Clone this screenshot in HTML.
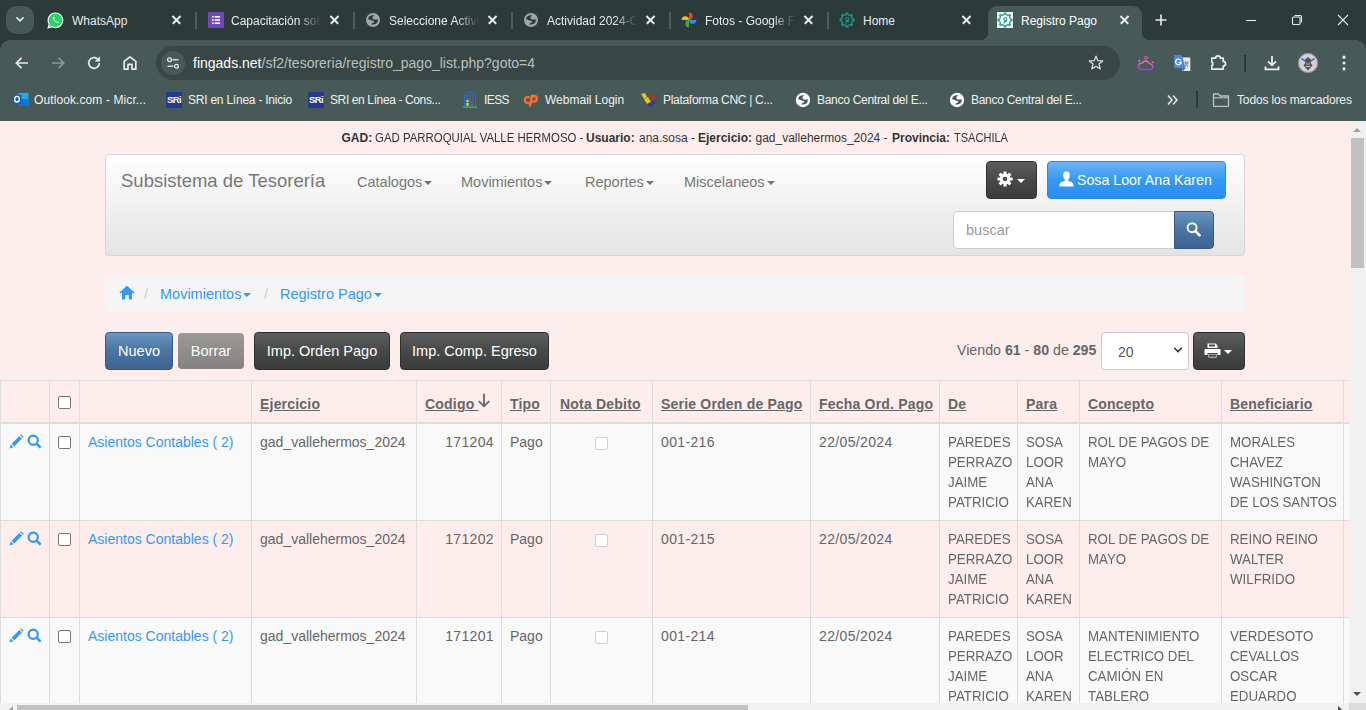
<!DOCTYPE html>
<html><head><meta charset="utf-8">
<style>
*{box-sizing:border-box;margin:0;padding:0}
html,body{width:1366px;height:710px;overflow:hidden;font-family:"Liberation Sans",sans-serif}
body{position:relative;background:#fdeded}
.abs{position:absolute}
#tabstrip{left:0;top:0;width:1366px;height:40px;background:#2c3a39}
#toolbar{left:0;top:40px;width:1366px;height:81px;background:#485a58}
.tt{position:absolute;top:13px;height:16px;line-height:16px;font-size:12px;color:#e8eceb;white-space:nowrap;overflow:hidden}
.fade{-webkit-mask-image:linear-gradient(90deg,#000 75%,transparent 100%)}
.tx{position:absolute;top:12px;width:16px;height:16px}
.tx:before,.tx:after{content:"";position:absolute;left:2.5px;top:7.3px;width:11px;height:1.5px;background:#e8eceb;transform:rotate(45deg)}
.tx:after{transform:rotate(-45deg)}
.sep{position:absolute;top:12px;width:2px;height:17px;background:#4e5c5a}
.bm{position:absolute;top:52px;height:17px;line-height:17px;font-size:12px;color:#eef1f0;white-space:nowrap;letter-spacing:-0.2px}
#page{left:0;top:121px;width:1349px;height:582px;background:#fdeded}
.nav{position:absolute;top:172px;font-size:14.5px;line-height:20px;color:#777;white-space:nowrap}
.car{display:inline-block;width:0;height:0;border-top:4px solid #777;border-left:4px solid transparent;border-right:4px solid transparent;vertical-align:middle;margin-left:2px}
.bc{position:absolute;top:284px;font-size:14.5px;line-height:20px;color:#3399f3;white-space:nowrap}
.btn-dark{background:linear-gradient(#5d5f5f,#474949 50%,#3a3c3c);border:1px solid #2f3131;border-radius:4px}
.btn-info{background:linear-gradient(#6db4f6,#3399f3 50%,#2a8ef0);border:1px solid #2a8be8;border-radius:4px}
.btn-primary{background:linear-gradient(#6b94c0,#4a74a2 50%,#3e6491);border:1px solid #345a85;border-radius:4px}
.btn{height:38px;line-height:36px;text-align:center;color:#fff;font-size:14.5px;border-radius:4px;white-space:nowrap}
.hl{left:0;width:1349px;height:1px;background:#dddddd}
.vl{top:380px;width:1px;height:323px;background:#dddddd}
.th{font-size:14px;line-height:20px;font-weight:bold;letter-spacing:0.2px;color:#666;text-decoration:underline;white-space:nowrap}
.td{font-size:14px;line-height:20px;color:#666;white-space:nowrap}
.up{transform:scaleX(0.95);transform-origin:0 0}
.lnk{color:#3399f3}
.num{letter-spacing:0.35px}
.cb{width:13px;height:13px;border:1px solid #767676;border-radius:2px;background:#fff}
.cbd{width:13px;height:13px;border:1px solid #cfcfcf;border-radius:2px;background:#fff}
#vscroll{left:1349px;top:121px;width:17px;height:582px;background:#f1f1f1}
#hscroll{left:0;top:703px;width:1349px;height:7px;background:#f1f1f1}
.gl{top:130px;font-size:12px;line-height:17px;color:#333;white-space:nowrap}
</style></head><body>
<div id="tabstrip" class="abs">
  <div class="abs" style="left:6px;top:6px;width:28px;height:28px;border-radius:10px;background:#475957"></div>
  <svg class="abs" style="left:14px;top:13px" width="12" height="12" viewBox="0 0 12 12"><path d="M2.5 4.4 L6 7.9 L9.5 4.4" stroke="#e6eaea" stroke-width="1.6" fill="none"/></svg>
  <!-- tab1 -->
  <svg class="abs" style="left:47px;top:12px" width="17" height="17" viewBox="0 0 17 17"><path d="M8.5 1 A7.3 7.3 0 0 1 8.5 15.6 A7.3 7.3 0 0 1 5 14.7 L1.2 15.8 L2.3 12.2 A7.3 7.3 0 0 1 8.5 1Z" fill="#25d366" stroke="#fff" stroke-width="1.2"/><path d="M5.8 5 C5.5 6.8 7.5 10.5 11 11.3 L12 10.2 L10.6 9.3 L9.9 10 C8.6 9.4 7.5 8.3 7.1 7.3 L7.8 6.5 L7 5 Z" fill="#fff"/></svg>
  <div class="tt" style="left:72px;width:90px">WhatsApp</div>
  <div class="tx" style="left:168px"></div>
  <div class="sep" style="left:195px"></div>
  <!-- tab2 -->
  <div class="abs" style="left:208px;top:12px;width:16px;height:16px;background:#7248b9;border-radius:1px"></div>
  <svg class="abs" style="left:208px;top:12px" width="16" height="16" viewBox="0 0 16 16"><g fill="#fff"><rect x="4" y="4" width="1.6" height="1.6"/><rect x="4" y="7.2" width="1.6" height="1.6"/><rect x="4" y="10.4" width="1.6" height="1.6"/><rect x="6.6" y="4" width="5.4" height="1.6"/><rect x="6.6" y="7.2" width="5.4" height="1.6"/><rect x="6.6" y="10.4" width="5.4" height="1.6"/></g></svg>
  <div class="tt fade" style="left:231px;width:90px">Capacitación sobre</div>
  <div class="tx" style="left:326px"></div>
  <div class="sep" style="left:353px"></div>
  <!-- tab3 -->
  <svg class="abs" style="left:365px;top:12px" width="16" height="16" viewBox="0 0 16 16"><circle cx="8" cy="8" r="7" fill="#a0a6a8"/><path d="M3.1 7.2 C3.3 5 4.8 3.3 8.5 3.1 L8.9 4.1 C7 4.5 6.8 5.8 8.2 7.2 C9 7.9 11 7.6 12.6 7.2 C13 9 12.5 10.5 11.2 11.6 C10 12.4 8 12.7 6.1 12.6 C6.5 11.5 7.5 11 9.2 10.2 C9.5 9.5 9 9 8.5 8.9 C6 8.5 4.5 7.5 3.1 7.2Z" fill="#2c3a39"/></svg>
  <div class="tt fade" style="left:389px;width:90px">Seleccione Actividad</div>
  <div class="tx" style="left:484px"></div>
  <div class="sep" style="left:511px"></div>
  <!-- tab4 -->
  <svg class="abs" style="left:523px;top:12px" width="16" height="16" viewBox="0 0 16 16"><circle cx="8" cy="8" r="7" fill="#a0a6a8"/><path d="M3.1 7.2 C3.3 5 4.8 3.3 8.5 3.1 L8.9 4.1 C7 4.5 6.8 5.8 8.2 7.2 C9 7.9 11 7.6 12.6 7.2 C13 9 12.5 10.5 11.2 11.6 C10 12.4 8 12.7 6.1 12.6 C6.5 11.5 7.5 11 9.2 10.2 C9.5 9.5 9 9 8.5 8.9 C6 8.5 4.5 7.5 3.1 7.2Z" fill="#2c3a39"/></svg>
  <div class="tt fade" style="left:547px;width:90px">Actividad 2024-Catálogo</div>
  <div class="tx" style="left:642px"></div>
  <div class="sep" style="left:669px"></div>
  <!-- tab5 photos -->
  <svg class="abs" style="left:681px;top:12px" width="16" height="16" viewBox="0 0 16 16"><path d="M8 0.6 A3.7 3.7 0 0 1 8 8 Z" fill="#ea4335"/><path d="M0.6 8 A3.7 3.7 0 0 1 8 8 Z" fill="#fbbc04"/><path d="M8 8 A3.7 3.7 0 0 0 15.4 8 Z" fill="#4285f4"/><path d="M8 8 A3.7 3.7 0 0 0 8 15.4 Z" fill="#34a853"/></svg>
  <div class="tt fade" style="left:705px;width:90px">Fotos - Google Fotos</div>
  <div class="tx" style="left:800px"></div>
  <div class="sep" style="left:827px"></div>
  <!-- tab6 home -->
  <svg class="abs" style="left:839px;top:12px" width="16" height="16" viewBox="0 0 16 16"><path d="M13.11 6.25 L13.32 7.07 L14.95 7.18 L14.95 8.82 L13.32 8.93 L12.85 10.38 L12.42 11.11 L13.50 12.33 L12.33 13.50 L11.11 12.42 L9.75 13.11 L8.93 13.32 L8.82 14.95 L7.18 14.95 L7.07 13.32 L5.62 12.85 L4.89 12.42 L3.67 13.50 L2.50 12.33 L3.58 11.11 L2.89 9.75 L2.68 8.93 L1.05 8.82 L1.05 7.18 L2.68 7.07 L3.15 5.62 L3.58 4.89 L2.50 3.67 L3.67 2.50 L4.89 3.58 L6.25 2.89 L7.07 2.68 L7.18 1.05 L8.82 1.05 L8.93 2.68 L10.38 3.15 L11.11 3.58 L12.33 2.50 L13.50 3.67 L12.42 4.89Z" fill="none" stroke="#1f9a8e" stroke-width="1.2" stroke-linejoin="round"/><circle cx="8.3" cy="7.2" r="1.5" fill="none" stroke="#1f9a8e" stroke-width="1.1"/><path d="M8 8.7 L6.8 11.5 M8.5 8.7 L9.6 10" stroke="#1f9a8e" stroke-width="1.1"/></svg>
  <div class="tt" style="left:863px;width:90px">Home</div>
  <div class="tx" style="left:958px"></div>
  <!-- active tab -->
  <div class="abs" style="left:988px;top:6px;width:154px;height:34px;background:#485a58;border-radius:9px 9px 0 0"></div>
  <div class="abs" style="left:980px;top:32px;width:8px;height:8px;background:radial-gradient(circle at 0 0,#2c3a39 8px,#485a58 8.5px)"></div>
  <div class="abs" style="left:1142px;top:32px;width:8px;height:8px;background:radial-gradient(circle at 100% 0,#2c3a39 8px,#485a58 8.5px)"></div>
  <div class="abs" style="left:997px;top:12px;width:16px;height:16px;background:#f2f5f4"></div>
  <svg class="abs" style="left:997px;top:12px" width="16" height="16" viewBox="0 0 16 16"><path d="M13.11 6.25 L13.32 7.07 L14.95 7.18 L14.95 8.82 L13.32 8.93 L12.85 10.38 L12.42 11.11 L13.50 12.33 L12.33 13.50 L11.11 12.42 L9.75 13.11 L8.93 13.32 L8.82 14.95 L7.18 14.95 L7.07 13.32 L5.62 12.85 L4.89 12.42 L3.67 13.50 L2.50 12.33 L3.58 11.11 L2.89 9.75 L2.68 8.93 L1.05 8.82 L1.05 7.18 L2.68 7.07 L3.15 5.62 L3.58 4.89 L2.50 3.67 L3.67 2.50 L4.89 3.58 L6.25 2.89 L7.07 2.68 L7.18 1.05 L8.82 1.05 L8.93 2.68 L10.38 3.15 L11.11 3.58 L12.33 2.50 L13.50 3.67 L12.42 4.89Z" fill="none" stroke="#1f9a8e" stroke-width="1.2" stroke-linejoin="round"/><circle cx="8.3" cy="7.2" r="1.5" fill="none" stroke="#1f9a8e" stroke-width="1.1"/><path d="M8 8.7 L6.8 11.5 M8.5 8.7 L9.6 10" stroke="#1f9a8e" stroke-width="1.1"/></svg>
  <div class="tt" style="left:1021px;width:90px;color:#fff">Registro Pago</div>
  <div class="tx" style="left:1116px"></div>
  <svg class="abs" style="left:1154px;top:13px" width="14" height="14" viewBox="0 0 14 14"><path d="M7 1.5 V12.5 M1.5 7 H12.5" stroke="#e8eceb" stroke-width="1.6"/></svg>
  <svg class="abs" style="left:1245px;top:14px" width="12" height="12" viewBox="0 0 12 12"><path d="M1 6.5 H11" stroke="#e8eceb" stroke-width="1.1"/></svg>
  <svg class="abs" style="left:1291px;top:14px" width="12" height="12" viewBox="0 0 12 12"><rect x="1.5" y="3" width="7.5" height="7.5" rx="1" stroke="#e8eceb" stroke-width="1.1" fill="none"/><path d="M3.5 1.5 H9.5 A1 1 0 0 1 10.5 2.5 V8.5" stroke="#e8eceb" stroke-width="1.1" fill="none"/></svg>
  <svg class="abs" style="left:1337px;top:14px" width="12" height="12" viewBox="0 0 12 12"><path d="M1 1 L11 11 M11 1 L1 11" stroke="#e8eceb" stroke-width="1.1"/></svg>
</div>
<div id="toolbar" class="abs">
  <div class="abs" style="left:0;top:0;width:10px;height:10px;background:radial-gradient(circle at 100% 100%,#485a58 9.5px,#2c3a39 10px)"></div>
  <div class="abs" style="left:1356px;top:0;width:10px;height:10px;background:radial-gradient(circle at 0 100%,#485a58 9.5px,#2c3a39 10px)"></div>
  <svg class="abs" style="left:13px;top:14px" width="18" height="18" viewBox="0 0 18 18"><path d="M15 9 H3.5 M8.5 3.8 L3.3 9 L8.5 14.2" stroke="#e8eceb" stroke-width="1.7" fill="none"/></svg>
  <svg class="abs" style="left:49px;top:14px" width="18" height="18" viewBox="0 0 18 18"><path d="M3 9 H14.5 M9.5 3.8 L14.7 9 L9.5 14.2" stroke="#8c9896" stroke-width="1.7" fill="none"/></svg>
  <svg class="abs" style="left:85px;top:14px" width="18" height="18" viewBox="0 0 18 18"><path d="M14.3 9 A5.3 5.3 0 1 1 12.4 4.9" stroke="#e8eceb" stroke-width="1.7" fill="none"/><path d="M14.6 2.6 V7.2 H10" fill="#e8eceb" stroke="#e8eceb" stroke-width="0.6"/></svg>
  <svg class="abs" style="left:121px;top:14px" width="18" height="18" viewBox="0 0 18 18"><path d="M3.2 15.2 V7.4 L9 2.8 L14.8 7.4 V15.2 H11 V10.3 H7 V15.2 Z" stroke="#e8eceb" stroke-width="1.7" fill="none" stroke-linejoin="round"/></svg>
  <div class="abs" style="left:156px;top:6px;width:964px;height:34px;border-radius:17px;background:#384645"></div>
  <div class="abs" style="left:161px;top:11px;width:24px;height:24px;border-radius:12px;background:#485a58"></div>
  <svg class="abs" style="left:166px;top:16px" width="14" height="14" viewBox="0 0 14 14"><g stroke="#e8eceb" stroke-width="1.3" fill="none"><circle cx="3.5" cy="3.8" r="1.9"/><path d="M6.5 3.8 H12.5"/><circle cx="10.5" cy="10.2" r="1.9"/><path d="M1.5 10.2 H7.5"/></g></svg>
  <div class="abs" style="left:193px;top:15px;font-size:14px;color:#fff;white-space:nowrap;line-height:17px">fingads.net<span style="color:#b7c0bf">/sf2/tesoreria/registro_pago_list.php?goto=4</span></div>
  <svg class="abs" style="left:1087px;top:14px" width="18" height="18" viewBox="0 0 18 18"><path d="M9 2.2 L10.9 6.7 L15.7 7 L12 10.1 L13.2 14.9 L9 12.3 L4.8 14.9 L6 10.1 L2.3 7 L7.1 6.7 Z" stroke="#d8dddc" stroke-width="1.3" fill="none" stroke-linejoin="round"/></svg>
  <!-- extensions -->
  <svg class="abs" style="left:1137px;top:15px" width="18" height="16" viewBox="0 0 18 16"><defs><linearGradient id="wg" x1="0" y1="0" x2="0" y2="1"><stop offset="0" stop-color="#ff6f9a"/><stop offset="1" stop-color="#9a3cf0"/></linearGradient></defs><path d="M4.2 14.6 H13.4 A2.6 2.6 0 0 0 14.3 9.6 A2.1 2.1 0 0 0 12.2 8.4 A4 4 0 0 0 5 8.3 A3.1 3.1 0 0 0 4.2 14.6 Z" stroke="url(#wg)" stroke-width="1.5" fill="none"/><circle cx="9" cy="2.6" r="1.5" stroke="#e060c0" stroke-width="1" fill="none"/><circle cx="2.3" cy="5.9" r="1.1" fill="#e060c0"/><circle cx="15.8" cy="7.3" r="1.1" fill="#e060b0"/></svg>
  <svg class="abs" style="left:1173px;top:15px" width="18" height="17" viewBox="0 0 18 17"><rect x="9.3" y="2.4" width="8" height="13.6" fill="#e6e6e6"/><path d="M12 6 L15 12 M15 6.5 L12 11.5 M11.5 8 H15.5" stroke="#6a7a78" stroke-width="0.9"/><path d="M1.1 0 H8.8 L12.6 13.2 H1.1 Z" fill="#4a86e8"/><path d="M9.3 13.2 H12.6 L10 16 Z" fill="#2a4fb0"/><path d="M7.8 5.4 A2.8 2.8 0 1 0 8.2 7.4 H5.8" stroke="#fff" stroke-width="1.4" fill="none"/></svg>
  <svg class="abs" style="left:1209px;top:13px" width="19" height="19" viewBox="0 0 19 19"><path d="M2.8 5.2 H6.6 A2.4 2.4 0 0 1 11.4 5.2 H14.2 V8.4 A2.3 2.3 0 0 1 14.2 13 V16.2 H2.8 V12.6 C4.2 12.3 4.2 9.5 2.8 9.2 Z" stroke="#e8eceb" stroke-width="1.7" fill="none" stroke-linejoin="round"/></svg>
  <div class="abs" style="left:1244px;top:15px;width:2px;height:17px;background:#2f3a38"></div>
  <svg class="abs" style="left:1263px;top:14px" width="18" height="18" viewBox="0 0 18 18"><path d="M9 2 V11 M5 7.3 L9 11.3 L13 7.3 M2.5 12.5 V15.3 H15.5 V12.5" stroke="#e8eceb" stroke-width="1.8" fill="none"/></svg>
  <svg class="abs" style="left:1298px;top:13px" width="20" height="20" viewBox="0 0 20 20"><circle cx="10" cy="10" r="10" fill="#d3cfd6"/><path d="M10 4 L6.5 7 L7.5 9.5 L5.5 12.5 L10 17.5 L14.5 12.5 L12.5 9.5 L13.5 7 Z" fill="#55545c"/><path d="M3.5 5.5 L7 8 M16.5 5.5 L13 8" stroke="#2a5ab0" stroke-width="1.4"/><path d="M8 11 H12 M7.5 13.5 H12.5" stroke="#c8c8c8" stroke-width="0.9"/><circle cx="10" cy="10" r="9.5" fill="none" stroke="#8a8a92" stroke-width="1"/></svg>
  <svg class="abs" style="left:1336px;top:14px" width="16" height="18" viewBox="0 0 16 18"><circle cx="8" cy="3.2" r="1.6" fill="#e8eceb"/><circle cx="8" cy="9" r="1.6" fill="#e8eceb"/><circle cx="8" cy="14.8" r="1.6" fill="#e8eceb"/></svg>
  <!-- bookmarks -->
  <div class="bm" style="left:34px;letter-spacing:0.1px">Outlook.com - Micr...</div>
  <svg class="abs" style="left:12px;top:51px" width="17" height="17" viewBox="0 0 17 17"><rect x="6" y="2" width="10.5" height="13" fill="#28a8ea"/><path d="M6 8 L16.5 8 V15 H6Z" fill="#0078d4"/><rect x="0.5" y="3.5" width="9" height="9.5" rx="1" fill="#0f5fb8"/><ellipse cx="5" cy="8.2" rx="2.4" ry="2.8" stroke="#fff" stroke-width="1.4" fill="none"/></svg>
  <div class="abs" style="left:166px;top:52px;width:16px;height:16px;background:#233a8f"></div>
  <div class="abs" style="left:166px;top:55px;width:16px;font-size:9.5px;font-weight:bold;color:#fff;letter-spacing:-0.6px;line-height:10px;text-align:center">SRi</div>
  <div class="bm" style="left:188px;letter-spacing:-0.23px">SRI en Línea - Inicio</div>
  <div class="abs" style="left:308px;top:52px;width:16px;height:16px;background:#233a8f"></div>
  <div class="abs" style="left:308px;top:55px;width:16px;font-size:9.5px;font-weight:bold;color:#fff;letter-spacing:-0.6px;line-height:10px;text-align:center">SRi</div>
  <div class="bm" style="left:330px;letter-spacing:-0.38px">SRI en Línea - Cons...</div>
  <svg class="abs" style="left:462px;top:51px" width="16" height="18" viewBox="0 0 16 18"><g stroke="#2a6fd0" stroke-width="1" fill="none"><path d="M2.5 16 V6 C2.5 2.5 5 1 8 1 C11 1 13.5 2.5 13.5 6 V16"/><path d="M5 16 V4 M8 16 V2 M11 16 V4"/></g><circle cx="5.5" cy="10" r="1.3" fill="#f2c21b"/><path d="M4 12 H7 L6.5 15 H4.5Z" fill="#f2c21b"/><circle cx="10" cy="11" r="1.1" fill="#e03030"/><path d="M9 12.5 H11.5 V15 H9Z" fill="#2a6fd0"/><path d="M1 16.2 H15" stroke="#30b040" stroke-width="1.6"/></svg>
  <div class="bm" style="left:484px;letter-spacing:-0.6px">IESS</div>
  <svg class="abs" style="left:522px;top:52px" width="17" height="16" viewBox="0 0 17 16"><g stroke="#ff6c2c" stroke-width="2.4" fill="none" stroke-linecap="round"><path d="M6.8 5.2 A3 3 0 1 0 6 11"/><path d="M8 13.5 L10 4 H12 A2.8 2.8 0 0 1 12 9.6 H10.5"/></g></svg>
  <div class="bm" style="left:545px;letter-spacing:0px">Webmail Login</div>
  <svg class="abs" style="left:640px;top:51px" width="17" height="17" viewBox="0 0 17 17"><path d="M1 3 L5 2 L7 6 L4 8Z" fill="#e8c020"/><path d="M4 8 L8 6 L11 11 L7 13Z" fill="#e8c020"/><path d="M7 13 L11 11 L13 15 L9 16Z" fill="#2a3f9a"/><path d="M11 3 C14 3 16 6 14 9 L12 11 L11 9 C13 7 13 5 11 5Z" fill="#d02828"/><path d="M11 11 L14 9 L16 12 L13 15Z" fill="#3040a0"/></svg>
  <div class="bm" style="left:663px;letter-spacing:-0.3px">Plataforma CNC | C...</div>
  <svg class="abs" style="left:795px;top:52px" width="16" height="16" viewBox="0 0 16 16"><circle cx="8" cy="8" r="7.2" fill="#ffffff"/><path d="M3.1 7.2 C3.3 5 4.8 3.3 8.5 3.1 L8.9 4.1 C7 4.5 6.8 5.8 8.2 7.2 C9 7.9 11 7.6 12.6 7.2 C13 9 12.5 10.5 11.2 11.6 C10 12.4 8 12.7 6.1 12.6 C6.5 11.5 7.5 11 9.2 10.2 C9.5 9.5 9 9 8.5 8.9 C6 8.5 4.5 7.5 3.1 7.2Z" fill="#485a58"/></svg>
  <div class="bm" style="left:817px;letter-spacing:-0.28px">Banco Central del E...</div>
  <svg class="abs" style="left:949px;top:52px" width="16" height="16" viewBox="0 0 16 16"><circle cx="8" cy="8" r="7.2" fill="#ffffff"/><path d="M3.1 7.2 C3.3 5 4.8 3.3 8.5 3.1 L8.9 4.1 C7 4.5 6.8 5.8 8.2 7.2 C9 7.9 11 7.6 12.6 7.2 C13 9 12.5 10.5 11.2 11.6 C10 12.4 8 12.7 6.1 12.6 C6.5 11.5 7.5 11 9.2 10.2 C9.5 9.5 9 9 8.5 8.9 C6 8.5 4.5 7.5 3.1 7.2Z" fill="#485a58"/></svg>
  <div class="bm" style="left:971px;letter-spacing:-0.28px">Banco Central del E...</div>
  <svg class="abs" style="left:1166px;top:54px" width="14" height="12" viewBox="0 0 14 12"><path d="M2 1.5 L6 6 L2 10.5 M7 1.5 L11 6 L7 10.5" stroke="#e8eceb" stroke-width="1.5" fill="none"/></svg>
  <div class="abs" style="left:1196px;top:51px;width:2px;height:17px;background:#2f3a38"></div>
  <svg class="abs" style="left:1212px;top:52px" width="18" height="16" viewBox="0 0 18 16"><path d="M1.5 2 H6.5 L8.2 4 H16.5 V14.3 H1.5 Z" stroke="#b9c2c1" stroke-width="1.3" fill="none" stroke-linejoin="round"/><path d="M1.5 5.8 H16.5" stroke="#b9c2c1" stroke-width="1.1"/></svg>
  <div class="bm" style="left:1237px;letter-spacing:-0.13px">Todos los marcadores</div>
</div>
<div id="page" class="abs"></div>
<div class="abs gl" style="left:341.5px"><b>GAD:</b></div><div class="abs gl" style="left:374.6px;transform:scaleX(0.951);transform-origin:0 0">GAD PARROQUIAL VALLE HERMOSO -</div><div class="abs gl" style="left:586px"><b>Usuario:</b></div><div class="abs gl" style="left:639px">ana.sosa -</div><div class="abs gl" style="left:698px"><b>Ejercicio:</b></div><div class="abs gl" style="left:755.5px">gad_vallehermos_2024 -</div><div class="abs gl" style="left:892px"><b>Provincia:</b></div><div class="abs gl" style="left:953.5px;transform:scaleX(0.92);transform-origin:0 0">TSACHILA</div>
<!-- navbar -->
<div class="abs" style="left:105px;top:154px;width:1140px;height:102px;border:1px solid #d5d5d5;border-radius:4px;background:linear-gradient(#ffffff,#eeeeee 60%,#e4e4e4)"></div>
<div class="abs" style="left:121px;top:170px;font-size:18.5px;line-height:22px;color:#777;white-space:nowrap">Subsistema de Tesorería</div>
<div class="nav" style="left:357px">Catalogos<i class="car"></i></div>
<div class="nav" style="left:461px">Movimientos<i class="car"></i></div>
<div class="nav" style="left:585px">Reportes<i class="car"></i></div>
<div class="nav" style="left:684px">Miscelaneos<i class="car"></i></div>
<div class="abs btn-dark" style="left:986px;top:161px;width:51px;height:38px"></div>
<svg class="abs" style="left:997px;top:171px" width="16" height="16" viewBox="0 0 16 16"><g fill="#fff" transform="translate(8,8)"><circle r="5.2"/><rect x="-1.6" y="-7.6" width="3.2" height="15.2" rx="0.6"/><rect x="-1.6" y="-7.6" width="3.2" height="15.2" rx="0.6" transform="rotate(45)"/><rect x="-1.6" y="-7.6" width="3.2" height="15.2" rx="0.6" transform="rotate(90)"/><rect x="-1.6" y="-7.6" width="3.2" height="15.2" rx="0.6" transform="rotate(135)"/></g><circle cx="8" cy="8" r="2.3" fill="#4d4f4f"/></svg>
<i class="car abs" style="left:1015px;top:179px;border-top-color:#fff"></i>
<div class="abs btn-info" style="left:1047px;top:161px;width:179px;height:38px"></div>
<svg class="abs" style="left:1059px;top:171px" width="15" height="16" viewBox="0 0 15 16"><path fill="#fff" d="M7.5 0.5 C10 0.5 11 2.5 10.8 4.8 C10.6 6.8 9.7 8.4 9 9 L9.2 9.8 C12 10.7 14.5 11.8 14.5 13.5 V15.5 H0.5 V13.5 C0.5 11.8 3 10.7 5.8 9.8 L6 9 C5.3 8.4 4.4 6.8 4.2 4.8 C4 2.5 5 0.5 7.5 0.5Z"/></svg>
<div class="abs" style="left:1077px;top:170px;font-size:14.2px;line-height:20px;color:#fff;white-space:nowrap">Sosa Loor Ana Karen</div>
<div class="abs" style="left:953px;top:211px;width:222px;height:38px;background:#fff;border:1px solid #cccccc;border-radius:4px 0 0 4px"></div>
<div class="abs" style="left:966px;top:220px;font-size:14.5px;line-height:20px;color:#999;white-space:nowrap">buscar</div>
<div class="abs btn-primary" style="left:1174px;top:211px;width:40px;height:38px;border-radius:0 4px 4px 0"></div>
<svg class="abs" style="left:1186px;top:222px" width="15" height="15" viewBox="0 0 15 15"><circle cx="6.1" cy="5.7" r="4.5" stroke="#fff" stroke-width="1.9" fill="none"/><path d="M9.3 9 L13.6 13.3" stroke="#fff" stroke-width="2.6" stroke-linecap="round"/></svg>
<!-- breadcrumb -->
<div class="abs" style="left:105px;top:276px;width:1140px;height:36px;background:#f5f5f5;border-radius:4px"></div>
<svg class="abs" style="left:119px;top:285px" width="16" height="15" viewBox="0 0 16 15"><path fill="#3399f3" d="M8 0.8 L15.6 7.6 L14.4 8.8 L13 7.5 V14.5 H9.8 V10 H6.2 V14.5 H3 V7.5 L1.6 8.8 L0.4 7.6 Z"/></svg>
<div class="bc" style="left:144px;color:#ccc">/</div>
<div class="bc" style="left:160px">Movimientos<i class="car" style="border-top-color:#3399f3"></i></div>
<div class="bc" style="left:264px;color:#ccc">/</div>
<div class="bc" style="left:280px">Registro Pago<i class="car" style="border-top-color:#3399f3"></i></div>
<!-- buttons -->
<div class="abs btn-primary btn" style="left:105px;top:332px;width:68px">Nuevo</div>
<div class="abs btn" style="left:178px;top:333px;width:66px;height:36px;line-height:36px;background:linear-gradient(#9b9898,#858181);border:none;color:#fafafa">Borrar</div>
<div class="abs btn-dark btn" style="left:254px;top:332px;width:136px">Imp. Orden Pago</div>
<div class="abs btn-dark btn" style="left:400px;top:332px;width:149px">Imp. Comp. Egreso</div>
<div class="abs" style="left:957px;top:340px;font-size:14.2px;line-height:20px;color:#666;white-space:nowrap">Viendo <b>61</b> - <b>80</b> de <b>295</b></div>
<div class="abs" style="left:1101px;top:332px;width:88px;height:38px;background:#fff;border:1px solid #ccc;border-radius:4px"></div>
<div class="abs" style="left:1118px;top:342px;font-size:14px;line-height:20px;color:#555">20</div>
<svg class="abs" style="left:1173px;top:346px" width="10" height="8" viewBox="0 0 10 8"><path d="M1.2 1.8 L5 5.6 L8.8 1.8" stroke="#333" stroke-width="1.5" fill="none"/></svg>
<div class="abs btn-dark" style="left:1193px;top:332px;width:52px;height:38px"></div>
<svg class="abs" style="left:1204px;top:343px" width="17" height="15" viewBox="0 0 17 15"><path fill="#fff" d="M3.5 0.5 H11.5 L13.5 2.5 V5 H3.5Z M1.5 6 H15.5 A1 1 0 0 1 16.5 7 V12 H13.5 V10 H3.5 V12 H0.5 V7 A1 1 0 0 1 1.5 6Z M4.5 11 H12.5 V14.5 H4.5Z"/><rect x="5" y="1.5" width="6" height="2" fill="#474949"/><rect x="5" y="11.5" width="7" height="2.3" fill="#474949"/></svg>
<i class="car abs" style="left:1222px;top:350px;border-top-color:#fff"></i>
<div class="abs" style="left:0;top:424px;width:1349px;height:96px;background:#f9f9f9"></div>
<div class="abs" style="left:0;top:618px;width:1349px;height:86px;background:#f9f9f9"></div>
<div class="abs hl" style="top:380px"></div>
<div class="abs hl" style="top:422px;height:2px"></div>
<div class="abs hl" style="top:520px"></div>
<div class="abs hl" style="top:617px"></div>
<div class="abs vl" style="left:0px"></div>
<div class="abs vl" style="left:49px"></div>
<div class="abs vl" style="left:79px"></div>
<div class="abs vl" style="left:251px"></div>
<div class="abs vl" style="left:416px"></div>
<div class="abs vl" style="left:501px"></div>
<div class="abs vl" style="left:550px"></div>
<div class="abs vl" style="left:652px"></div>
<div class="abs vl" style="left:810px"></div>
<div class="abs vl" style="left:939px"></div>
<div class="abs vl" style="left:1017px"></div>
<div class="abs vl" style="left:1079px"></div>
<div class="abs vl" style="left:1221px"></div>
<div class="abs vl" style="left:1343px"></div>
<div class="abs th" style="left:260px;top:394px;">Ejercicio</div>
<div class="abs th" style="left:425px;top:394px;">Codigo&nbsp;</div>
<div class="abs th" style="left:510px;top:394px;">Tipo</div>
<div class="abs th" style="left:560px;top:394px;">Nota Debito</div>
<div class="abs th" style="left:661px;top:394px;">Serie Orden de Pago</div>
<div class="abs th" style="left:819px;top:394px;">Fecha Ord. Pago</div>
<div class="abs th" style="left:948px;top:394px;">De</div>
<div class="abs th" style="left:1026px;top:394px;">Para</div>
<div class="abs th" style="left:1088px;top:394px;">Concepto</div>
<div class="abs th" style="left:1230px;top:394px;">Beneficiario</div>
<div class="abs cb" style="left:58px;top:396px"></div>
<svg class="abs" style="left:477px;top:393px" width="14" height="15" viewBox="0 0 14 15"><path d="M7 0.8 V13.3 M1.8 8.1 L7 13.3 L12.2 8.1" stroke="#666" stroke-width="1.8" fill="none"/></svg>
<div class="abs" style="left:9px;top:434px;width:15px;height:15px"><svg width="15" height="15" viewBox="0 0 15 15"><path fill="#3399f3" d="M0.5 14.5 L1.8 10.6 L4.4 13.2 Z M2.6 9.8 L10.4 2 L13 4.6 L5.2 12.4 Z M11.2 1.2 L12.2 0.3 L14.8 2.9 L13.8 3.8 Z"/></svg></div>
<div class="abs" style="left:27px;top:434px;width:15px;height:15px"><svg width="15" height="15" viewBox="0 0 15 15"><circle cx="6.2" cy="6.2" r="4.6" stroke="#3399f3" stroke-width="2.2" fill="none"/><path d="M9.4 9.4 L13.6 13.6" stroke="#3399f3" stroke-width="2.5"/></svg></div>
<div class="abs cb" style="left:58px;top:436px"></div>
<div class="abs td lnk" style="left:88px;top:432px;">Asientos Contables ( 2)</div>
<div class="abs td" style="left:260px;top:432px;">gad_vallehermos_2024</div>
<div class="abs td num" style="left:417px;top:432px;width:77px;text-align:right">171204</div>
<div class="abs td" style="left:510px;top:432px;">Pago</div>
<div class="abs cbd" style="left:595px;top:437px"></div>
<div class="abs td num" style="left:661px;top:432px;">001-216</div>
<div class="abs td num" style="left:819px;top:432px;">22/05/2024</div>
<div class="abs td up" style="left:948px;top:432px;">PAREDES<br>PERRAZO<br>JAIME<br>PATRICIO</div>
<div class="abs td up" style="left:1026px;top:432px;">SOSA<br>LOOR<br>ANA<br>KAREN</div>
<div class="abs td up" style="left:1088px;top:432px;">ROL DE PAGOS DE<br>MAYO</div>
<div class="abs td up" style="left:1230px;top:432px;">MORALES<br>CHAVEZ<br>WASHINGTON<br>DE LOS SANTOS</div>
<div class="abs" style="left:9px;top:531px;width:15px;height:15px"><svg width="15" height="15" viewBox="0 0 15 15"><path fill="#3399f3" d="M0.5 14.5 L1.8 10.6 L4.4 13.2 Z M2.6 9.8 L10.4 2 L13 4.6 L5.2 12.4 Z M11.2 1.2 L12.2 0.3 L14.8 2.9 L13.8 3.8 Z"/></svg></div>
<div class="abs" style="left:27px;top:531px;width:15px;height:15px"><svg width="15" height="15" viewBox="0 0 15 15"><circle cx="6.2" cy="6.2" r="4.6" stroke="#3399f3" stroke-width="2.2" fill="none"/><path d="M9.4 9.4 L13.6 13.6" stroke="#3399f3" stroke-width="2.5"/></svg></div>
<div class="abs cb" style="left:58px;top:533px"></div>
<div class="abs td lnk" style="left:88px;top:529px;">Asientos Contables ( 2)</div>
<div class="abs td" style="left:260px;top:529px;">gad_vallehermos_2024</div>
<div class="abs td num" style="left:417px;top:529px;width:77px;text-align:right">171202</div>
<div class="abs td" style="left:510px;top:529px;">Pago</div>
<div class="abs cbd" style="left:595px;top:534px"></div>
<div class="abs td num" style="left:661px;top:529px;">001-215</div>
<div class="abs td num" style="left:819px;top:529px;">22/05/2024</div>
<div class="abs td up" style="left:948px;top:529px;">PAREDES<br>PERRAZO<br>JAIME<br>PATRICIO</div>
<div class="abs td up" style="left:1026px;top:529px;">SOSA<br>LOOR<br>ANA<br>KAREN</div>
<div class="abs td up" style="left:1088px;top:529px;">ROL DE PAGOS DE<br>MAYO</div>
<div class="abs td up" style="left:1230px;top:529px;">REINO REINO<br>WALTER<br>WILFRIDO</div>
<div class="abs" style="left:9px;top:628px;width:15px;height:15px"><svg width="15" height="15" viewBox="0 0 15 15"><path fill="#3399f3" d="M0.5 14.5 L1.8 10.6 L4.4 13.2 Z M2.6 9.8 L10.4 2 L13 4.6 L5.2 12.4 Z M11.2 1.2 L12.2 0.3 L14.8 2.9 L13.8 3.8 Z"/></svg></div>
<div class="abs" style="left:27px;top:628px;width:15px;height:15px"><svg width="15" height="15" viewBox="0 0 15 15"><circle cx="6.2" cy="6.2" r="4.6" stroke="#3399f3" stroke-width="2.2" fill="none"/><path d="M9.4 9.4 L13.6 13.6" stroke="#3399f3" stroke-width="2.5"/></svg></div>
<div class="abs cb" style="left:58px;top:630px"></div>
<div class="abs td lnk" style="left:88px;top:626px;">Asientos Contables ( 2)</div>
<div class="abs td" style="left:260px;top:626px;">gad_vallehermos_2024</div>
<div class="abs td num" style="left:417px;top:626px;width:77px;text-align:right">171201</div>
<div class="abs td" style="left:510px;top:626px;">Pago</div>
<div class="abs cbd" style="left:595px;top:631px"></div>
<div class="abs td num" style="left:661px;top:626px;">001-214</div>
<div class="abs td num" style="left:819px;top:626px;">22/05/2024</div>
<div class="abs td up" style="left:948px;top:626px;">PAREDES<br>PERRAZO<br>JAIME<br>PATRICIO</div>
<div class="abs td up" style="left:1026px;top:626px;">SOSA<br>LOOR<br>ANA<br>KAREN</div>
<div class="abs td up" style="left:1088px;top:626px;">MANTENIMIENTO<br>ELECTRICO DEL<br>CAMIÓN EN<br>TABLERO</div>
<div class="abs td up" style="left:1230px;top:626px;">VERDESOTO<br>CEVALLOS<br>OSCAR<br>EDUARDO</div>
<div id="vscroll" class="abs"></div>
<svg class="abs" style="left:1352px;top:126px" width="10" height="8" viewBox="0 0 10 8"><path d="M1 6 L5 2 L9 6Z" fill="#a3a3a3"/></svg>
<div class="abs" style="left:1351px;top:138px;width:13px;height:130px;background:#c1c1c1"></div>
<svg class="abs" style="left:1352px;top:690px" width="10" height="8" viewBox="0 0 10 8"><path d="M1 2 L5 6 L9 2Z" fill="#505050"/></svg>
<div id="hscroll" class="abs"></div>
<div class="abs" style="left:17px;top:705px;width:731px;height:5px;background:#c1c1c1"></div>
<svg class="abs" style="left:1337px;top:705px" width="8" height="9" viewBox="0 0 8 9"><path d="M1 1 L5 4.5 L1 8Z" fill="#505050"/></svg>
<svg class="abs" style="left:6px;top:705px" width="8" height="9" viewBox="0 0 8 9"><path d="M7 1 L3 4.5 L7 8Z" fill="#a3a3a3"/></svg>
<div class="abs" style="left:1349px;top:703px;width:17px;height:7px;background:#dcdcdc"></div>
</body></html>
